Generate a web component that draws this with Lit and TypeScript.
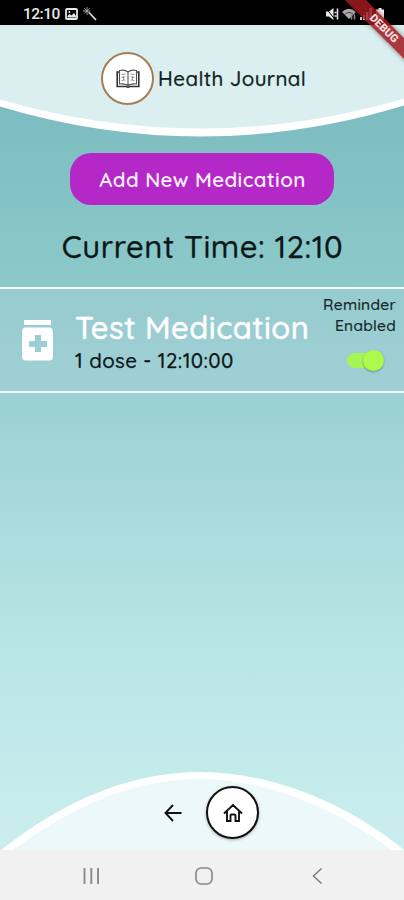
import { LitElement, html, css } from "lit";
import { customElement, property, state } from "lit/decorators.js";
import { classMap } from "lit/directives/class-map.js";

@customElement("status-bar")
class StatusBar extends LitElement {
  static styles = css`
    :host { display: flex; align-items: center; justify-content: space-between; box-sizing: border-box;
      height: 25px; padding: 2px 20px 0 23px; background: #000; color: #e8e8e8;
      font: 500 15.5px/22px Roboto, sans-serif; }
    .group { display: flex; align-items: center; gap: 5px; }
    .time { letter-spacing: -0.5px; }
    svg { display: block; }
    .right { gap: 3px; }
  `;
  render() {
    return html`
      <div class="group">
        <span class="time">12:10</span>
        <svg width="13" height="12" viewBox="0 0 13 12"><rect x="1" y="1" width="11" height="10" rx="1" fill="none" stroke="#e8e8e8" stroke-width="1.8"/><path d="M2.5 9.5V8l2-2 2 1.5L9 5l2 3v1.5z" fill="#e8e8e8"/><circle cx="4.3" cy="3.9" r="1" fill="#e8e8e8"/></svg>
        <svg width="14" height="14" viewBox="0 0 14 14"><path d="M6 5.5 13 13" stroke="#ddd" stroke-width="1.8"/><path d="M4 0v8M0 4h7.5M1.2 1.2l5.3 5.3M6.5 1.2 1.2 6.5" stroke="#aaa" stroke-width=".9"/></svg>
      </div>
      <div class="group right">
        <svg width="13" height="12" viewBox="0 0 13 12"><path d="M0 3.5h3L7.5 0v12L3 8.5H0z" fill="#e8e8e8"/><path d="M0 0l8.5 11" stroke="#000" stroke-width="1"/><path d="M8.5 4.5h2M8.5 8h2M11.5 .5v11" stroke="#ddd" stroke-width="1.6" fill="none"/></svg>
        <svg width="15" height="12" viewBox="0 0 15 12"><path d="M0 4Q7 -2.5 14 4L7 11z" fill="#aaa"/><path d="M2.5 6.5Q7 2.5 11.5 6.5" stroke="#444" fill="none"/><path d="M9.5 6.5v5M12.5 6.5v5" stroke="#888" stroke-width="1.5"/></svg>
        <svg width="13" height="12" viewBox="0 0 13 12"><path d="M0 12V9h2v3zM3 12V7h2v5zM6 12V4h2.5v8zM9.5 12V0H12v12z" fill="#e8e8e8"/></svg>
        <svg width="8" height="12" viewBox="0 0 8 12"><path d="M2.5 0h3v1.5H8V12H0V1.5h2.5z" fill="#f2f2f2"/></svg>
      </div>
    `;
  }
}

@customElement("page-header")
class PageHeader extends LitElement {
  static styles = css`
    :host { display: grid; height: 112px; }
    .curve, .title { grid-area: 1 / 1; }
    .curve { display: block; }
    .title { display: flex; align-items: flex-start; justify-content: center; gap: 4px; padding-top: 27px; }
    .badge { display: grid; place-items: center; box-sizing: border-box; width: 53px; height: 53px;
      border: 2px solid #a27e59; border-radius: 50%; background: #fff; }
    h1 { margin: 0; font-weight: 500; font-size: 20.5px; line-height: 53px; width: 145px; white-space: nowrap;
      letter-spacing: 0.4px; color: #10201f; -webkit-text-stroke: 0.25px #10201f; }
  `;
  render() {
    return html`
      <svg class="curve" width="404" height="112" viewBox="0 0 404 112">
        <path d="M0 0H404V80.5Q202 142 0 81.5Z" fill="#fff"/>
        <path d="M0 0H404V73.5Q202 133 0 74.5Z" fill="#dceff0"/>
      </svg>
      <div class="title">
        <span class="badge">
          <svg width="24" height="20" viewBox="0 0 24 20" fill="none" stroke="#333">
            <path d="M3.5 3H1.2V17.500H10.500Q12 19 13.500 17.500H22.800V3H20.500" stroke-width="1.6"/>
            <path d="M12 3Q9 .3 3.5 1.5V15Q9 14.500 12 16.500Q15 14.500 20.500 15V1.500Q15 .3 12 3V16.500" stroke="#555" stroke-width="1.1"/>
            <path d="M5.5 5.5 9.5 5M5.500 8.500l4-.5M5.500 11.500l4-.5M14.500 5l4 .5M14.500 8l4 .5M14.500 11l4 .5M7.500 7v4M16.500 7v4" stroke="#999"/>
          </svg>
        </span>
        <h1>Health Journal</h1>
      </div>
    `;
  }
}

@customElement("medication-row")
class MedicationRow extends LitElement {
  @property() name = "";
  @property() detail = "";
  @state() private enabled = true;
  static styles = css`
    :host { display: flex; box-sizing: border-box; height: 106px; border-top: 2px solid #f5fcfc;
      border-bottom: 2px solid #f5fcfc; background: rgba(190, 212, 228, 0.2); }
    .jar { display: block; margin: 31px 0 0 21px; }
    .info { width: 236px; margin: 21px 0 0 22px; white-space: nowrap; }
    .name { color: #fff; font-size: 31px; line-height: 36px; letter-spacing: 0.5px; -webkit-text-stroke: 0.5px #fff; }
    .detail { color: #0c1719; font-size: 20.5px; line-height: 26px; margin-top: 1px; letter-spacing: 0.4px; -webkit-text-stroke: 0.25px #0c1719; }
    .reminder { display: flex; flex-direction: column; align-items: flex-end; flex: 1; margin: 5px 8px 0 0;
      color: #172628; font-size: 15.5px; line-height: 20.5px; letter-spacing: 0.3px; text-align: right; -webkit-text-stroke: 0.2px #172628; }
    .switch { display: flex; align-items: center; justify-content: flex-end; width: 37px; height: 15px; margin: 18px 12px 0 0;
      padding: 0; border: 0; border-radius: 8px; background: #a5f456; }
    .off { justify-content: flex-start; background: #9eb4b5; }
    .knob { width: 21px; height: 21px; flex: none; border-radius: 50%; background: #adfa4c; box-shadow: 0 1px 2px rgba(30, 90, 70, 0.5); }
  `;
  render() {
    return html`
      <svg class="jar" width="32" height="41" viewBox="0 0 32 41">
        <path d="M3 0H30V5H3Z" fill="#fff"/>
        <path fill-rule="evenodd" fill="#fff" d="M4.5 7.5h23.5Q32 7.5 32 12v24.500Q32 40.500 28 40.500H5Q1 40.500 1 36.500V12Q1 7.500 4.500 7.500ZM14 15v6H8v6h6v5h6v-5h6v-6h-6v-6Z"/>
      </svg>
      <div class="info"><div class="name">${this.name}</div><div class="detail">${this.detail}</div></div>
      <div class="reminder">
        <span>Reminder</span><span>Enabled</span>
        <button class=${classMap({ switch: true, off: !this.enabled })} @click=${() => (this.enabled = !this.enabled)}><span class="knob"></span></button>
      </div>
    `;
  }
}

@customElement("page-footer")
class PageFooter extends LitElement {
  static styles = css`
    :host { display: grid; height: 79px; }
    .curve, .actions { grid-area: 1 / 1; display: block; }
    .actions { display: flex; align-items: flex-start; padding: 15px 0 0 163px; }
    .back { margin: 18px 24px 0 0; }
    .home { display: grid; place-items: center; box-sizing: border-box; width: 53px; height: 53px;
      border: 2px solid #111; border-radius: 50%; background: #fff; box-shadow: 0 1px 3px rgba(0, 0, 0, 0.3); }
  `;
  render() {
    return html`
      <svg class="curve" width="404" height="79" viewBox="0 0 404 79">
        <path d="M1 79C68 26 135 1 200 1S340 27 404 79Z" fill="#fff"/>
        <path d="M13 79C78 31 138 8 200 8S328 33 392 79Z" fill="#ecf8fa"/>
      </svg>
      <div class="actions">
        <svg class="back" width="19" height="18" viewBox="0 0 19 18" fill="none" stroke="#111" stroke-width="1.9"><path d="M18.5 9H2.5M10 1 2.5 9l7.5 8"/></svg>
        <span class="home"><svg width="20" height="20" viewBox="0 0 20 20" fill="none" stroke="#111" stroke-width="1.9"><path d="M1 10.5 10 2l9 8.5M4 8.5v9.500h3.500V12.500q0-1 1-1h3q1 0 1 1V18H16V8.500"/></svg></span>
      </div>
    `;
  }
}

@customElement("system-nav")
class SystemNav extends LitElement {
  static styles = css`
    :host { display: flex; align-items: center; height: 50px; padding: 2px 81px 0 83px; box-sizing: border-box; justify-content: space-between; background: #f1f1f1; }
    svg:nth-child(2) { margin-right: 4px; }
  `;
  render() {
    return html`
      <svg width="17" height="18" viewBox="0 0 17 18" stroke="#8a8a8a" stroke-width="1.9"><path d="M1.5 1v16M8.3 1v16M15 1v16"/></svg>
      <svg width="18" height="18" viewBox="0 0 18 18" fill="none" stroke="#858585" stroke-width="1.6"><rect x="1" y="1" width="16" height="16" rx="5"/></svg>
      <svg width="11" height="18" viewBox="0 0 11 18" fill="none" stroke="#808080" stroke-width="1.6"><path d="M9.5 1.5 1.5 9l8 7.5"/></svg>
    `;
  }
}

@customElement("app-root")
class AppRoot extends LitElement {
  static styles = css`
    :host { position: relative; display: flex; flex-direction: column; width: 404px; height: 900px; overflow: hidden;
      font-family: Quicksand, Lato, sans-serif; font-weight: 500; }
    .page { flex: 1; display: flex; flex-direction: column;
      background: linear-gradient(#75b7bd 0, #8dcaca 270px, #9dd2d5 390px, #afdedf 535px, #bee8e8 675px, #caeeed 100%); }
    .add { align-self: center; flex: none; width: 264px; height: 52px; margin: 16px 0 0; padding: 0 0 0 1px; border: 0; border-radius: 21px;
      background: #b428c8; color: #fdf0fe; font: inherit; font-weight: 600; font-size: 20.5px; line-height: 52px; letter-spacing: 0.38px; white-space: nowrap; }
    .clock { margin: 22px 0 20px; padding-left: 1px; text-align: center; font-size: 31px; line-height: 40px; color: #0c1718; letter-spacing: 0.57px; -webkit-text-stroke: 0.25px #0c1718; }
    page-footer { margin-top: auto; }
    .ribbon { position: absolute; top: 21px; right: -45px; width: 130px; height: 15px; transform: rotate(45deg);
      background: rgba(160, 25, 32, 0.85); color: #f3dede; text-align: center; font: 900 11px/15px Roboto, sans-serif; box-shadow: 0 0 5px rgba(0, 0, 0, 0.45); }
  `;
  render() {
    return html`
      <status-bar></status-bar>
      <main class="page">
        <page-header></page-header>
        <button class="add">Add New Medication</button>
        <div class="clock">Current Time: 12:10</div>
        <medication-row name="Test Medication" detail="1 dose - 12:10:00"></medication-row>
        <page-footer></page-footer>
      </main>
      <system-nav></system-nav>
      <div class="ribbon">DEBUG</div>
    `;
  }
}
